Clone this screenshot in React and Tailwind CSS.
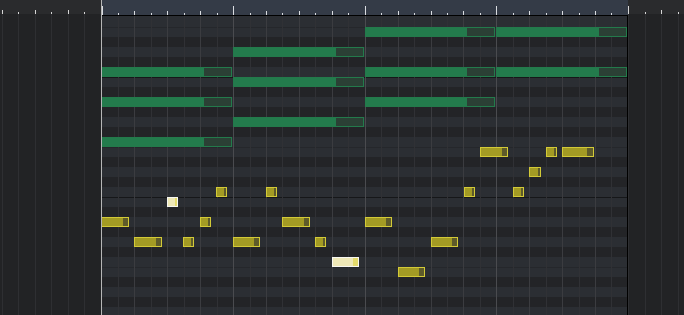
import React from 'react';

const STEP = 16.45; // one eighth of a beat grid
const BLACK = [1, 3, 6, 8, 10];

// pitch for each row (k = 0 is the top visible row, B sits at k = 6)
const semitone = (k) => 11 - ((((k - 6) % 12) + 12) % 12);

const rows = Array.from({ length: 30 }, (_, k) => k);

// notes: x in page pixels, k = row, w = width
const greenNotes = [
  { x: 101, k: 5, w: 131 },
  { x: 101, k: 8, w: 131 },
  { x: 101, k: 12, w: 131 },
  { x: 233, k: 3, w: 131 },
  { x: 233, k: 6, w: 131 },
  { x: 233, k: 10, w: 131 },
  { x: 365, k: 1, w: 130 },
  { x: 365, k: 5, w: 130 },
  { x: 365, k: 8, w: 130 },
  { x: 496, k: 1, w: 131 },
  { x: 496, k: 5, w: 131 },
];

const yellowNotes = [
  { x: 480, k: 13, w: 28 },
  { x: 546, k: 13, w: 11 },
  { x: 562, k: 13, w: 32 },
  { x: 529, k: 15, w: 12 },
  { x: 216, k: 17, w: 11 },
  { x: 266, k: 17, w: 11 },
  { x: 464, k: 17, w: 11 },
  { x: 513, k: 17, w: 11 },
  { x: 167, k: 18, w: 11, hot: true },
  { x: 101, k: 20, w: 28 },
  { x: 200, k: 20, w: 11 },
  { x: 282, k: 20, w: 28 },
  { x: 365, k: 20, w: 27 },
  { x: 134, k: 22, w: 28 },
  { x: 183, k: 22, w: 11 },
  { x: 233, k: 22, w: 27 },
  { x: 315, k: 22, w: 11 },
  { x: 431, k: 22, w: 27 },
  { x: 332, k: 24, w: 27, hot: true },
  { x: 398, k: 25, w: 27 },
];

const SidePanel = ({ ticks, className }) => (
  <div className={`flex flex-col shrink-0 ${className}`}>
    <div className="relative h-[14px] bg-[#2a2b2d]">
      {ticks.map((t) => (
        <div
          key={t.x}
          className={`absolute bottom-0 w-px bg-[#d6d6d6] ${t.bar ? 'h-[8px]' : t.tall ? 'h-[4px]' : 'h-[2px]'}`}
          style={{ left: t.x }}
        />
      ))}
    </div>
    <div className="relative flex-1 bg-[#222325]">
      {ticks.map((t) => (
        <div key={t.x} className="absolute top-0 bottom-0 w-px bg-[#2e2f32]" style={{ left: t.x }} />
      ))}
    </div>
  </div>
);

const Note = ({ n, kind }) => {
  const styles = {
    green: ['border-[#237a4b]', 'bg-[#237b4c]', 'bg-[#2b4035]'],
    yellow: ['border-[#d3ca37]', 'bg-[#a39b24]', 'bg-[#5e5b2a]'],
    hot: ['border-[#f7f7f0]', 'bg-[#eee8b7]', 'bg-[#e4db6c]'],
  }[kind];
  return (
    <div
      className={`absolute flex h-[10px] border ${styles[0]}`}
      style={{ left: n.x - 102, top: n.k * 10 + 1, width: n.w }}
    >
      <div className={`flex-1 ${styles[1]}`} />
      <div className={`w-[21%] ${styles[2]}`} />
    </div>
  );
};

const Ruler = () => (
  <div className="relative h-[16px] shrink-0 overflow-hidden border-b border-black bg-[#343b47] font-['Liberation_Sans',sans-serif]">
    {Array.from({ length: 33 }, (_, i) => {
      const x = Math.round(101.5 + i * STEP) - 102;
      const h = i % 8 === 0 ? 'h-[9px]' : i % 2 === 0 ? 'h-[4px]' : 'h-[2px]';
      return <div key={i} className={`absolute bottom-0 w-px bg-[#d9dce1] ${h}`} style={{ left: x }} />;
    })}
    {[1, 2, 3, 4].map((b) => (
      <span
        key={b}
        className="absolute top-[-9px] text-[11px] leading-[11px] text-[#c6d3e6]"
        style={{ left: Math.round(101.5 + (b - 1) * 8 * STEP) - 102 + 2 }}
      >
        {b}
      </span>
    ))}
  </div>
);

const Grid = () => (
  <div className="relative flex-1 overflow-hidden border-r border-black">
    <div className="flex flex-col">
      {rows.map((k) => {
        const s = semitone(k);
        const black = BLACK.includes(s);
        let cls = black ? 'bg-[#232427]' : 'bg-[#2b2e33]';
        if (s === 11) cls += ' border-t border-[#161719]';
        if (s === 4) cls += ' border-t border-[#25272b]';
        return <div key={k} className={`${k === 0 ? 'h-[11px]' : 'h-[10px]'} shrink-0 ${cls}`} />;
      })}
    </div>
    {Array.from({ length: 31 }, (_, j) => {
      const i = j + 1;
      const x = Math.round(101.5 + i * STEP) - 102;
      const c = i % 8 === 0 ? 'bg-[#4a4b4f]' : i % 2 === 0 ? 'bg-[#3b3c40]' : 'bg-[#303135]';
      return <div key={i} className={`absolute top-0 bottom-0 w-px ${c}`} style={{ left: x }} />;
    })}
    {greenNotes.map((n, i) => (
      <Note key={`g${i}`} n={n} kind="green" />
    ))}
    {yellowNotes.map((n, i) => (
      <Note key={`y${i}`} n={n} kind={n.hot ? 'hot' : 'yellow'} />
    ))}
  </div>
);

const App = () => {
  const leftTicks = [
    { x: 2, tall: true },
    { x: 18 },
    { x: 35, tall: true },
    { x: 51 },
    { x: 68, tall: true },
    { x: 84 },
  ];
  const rightTicks = [
    { x: 0, bar: true },
    { x: 17 },
    { x: 33, tall: true },
    { x: 50 },
  ];

  return (
    <div className="flex h-[315px] w-[684px] overflow-hidden bg-[#222325]">
      <SidePanel ticks={leftTicks} className="w-[101px]" />
      <div className="flex w-[527px] shrink-0 flex-col border-l border-[#b6b6b6]">
        <Ruler />
        <Grid />
      </div>
      <SidePanel ticks={rightTicks} className="w-[56px]" />
    </div>
  );
};

export default App;
